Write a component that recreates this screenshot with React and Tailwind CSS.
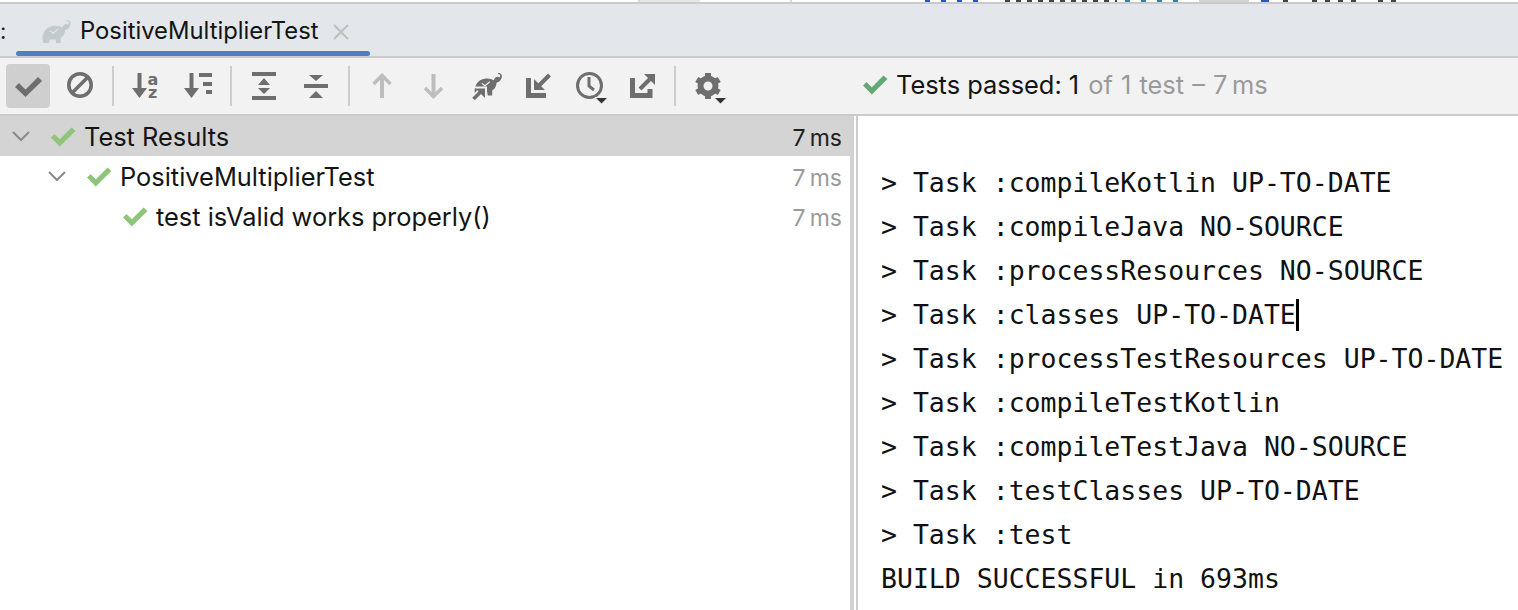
import React from "react";

const ui = "font-['Inter','Liberation_Sans',sans-serif]";
const G = "#6e6e6e";

const Check = ({ c = "#8fc57a", w = 26, h = 20 }) => (
  <svg width={w} height={h} viewBox="0 0 26 20" className="shrink-0">
    <path d="M1 10.5 L4.5 7 L9.8 12.3 L21.5 0.5 L25.5 4 L9.8 19.5 Z" fill={c} />
  </svg>
);

const Chevron = () => (
  <svg width="18" height="12" viewBox="0 0 18 12" className="shrink-0">
    <path d="M1 2 L9 10 L17 2" fill="none" stroke="#8a8a8a" strokeWidth="2" />
  </svg>
);

const Elephant = ({ fill, eye }) => (
  <>
    <path
      d="M3 28 C0 20 4 8 16 7 C20 6.5 24 8 26 9 C27.5 5 31 4 33 5.5 C35 3 34 1 31.5 1.5 L31 0 C35 -0.5 37.5 3 35.5 7 C34 10.5 31.5 12 29.5 12 C29 18 26 21 24 22 L24 28 L18.5 28 L17.5 23 C15 24 13 24 11 23.5 L9.5 28 Z"
      fill={fill}
    />
    {eye && <path d="M11 13 L15 16 L21 11" fill="none" stroke={eye} strokeWidth="1.4" />}
  </>
);

const Tool = ({ children }) => (
  <svg width="44" height="44" viewBox="0 0 44 44">
    {children}
  </svg>
);

const Caret = () => <path d="M28 33.5 H41 L34.5 40 Z" fill="#333333" stroke="#f2f2f2" strokeWidth="1" />;

const icons = {
  check: (
    <Tool>
      <path d="M9 23 L13 19 L19.5 25.5 L32 13 L36 17 L19.5 33 Z" fill={G} />
    </Tool>
  ),
  ban: (
    <Tool>
      <circle cx="22" cy="21" r="11.2" fill="none" stroke={G} strokeWidth="3.6" />
      <path d="M14 29 L30 13" stroke={G} strokeWidth="3.6" />
    </Tool>
  ),
  sortAz: (
    <Tool>
      <path d="M15.5 9 V26" stroke={G} strokeWidth="4" />
      <path d="M8 24 H23 L15.5 34 Z" fill={G} />
      <text x="23.5" y="21" fontSize="16" fontWeight="700" fontFamily="DejaVu Sans" fill={G}>a</text>
      <text x="24" y="34" fontSize="16" fontWeight="700" fontFamily="DejaVu Sans" fill={G}>z</text>
    </Tool>
  ),
  sortDur: (
    <Tool>
      <path d="M15.5 9 V26" stroke={G} strokeWidth="4" />
      <path d="M8 24 H23 L15.5 34 Z" fill={G} />
      <path d="M23 11 H36 M27 20 H36 M30 28 H36" stroke={G} strokeWidth="4" />
    </Tool>
  ),
  expand: (
    <Tool>
      <path d="M10 10 H34 M10 34 H34" stroke={G} strokeWidth="4" />
      <path d="M22 14 L28 21 H16 Z M16 24 H28 L22 30 Z" fill={G} />
    </Tool>
  ),
  collapse: (
    <Tool>
      <path d="M10 22 H34" stroke={G} strokeWidth="4" />
      <path d="M15 11 H29 L22 17 Z M22 27 L29 34 H15 Z" fill={G} />
    </Tool>
  ),
  up: (
    <Tool>
      <path d="M23 12 V34" stroke="#bdbdbd" strokeWidth="4" />
      <path d="M14.5 20 L23 11.5 L31.5 20" fill="none" stroke="#bdbdbd" strokeWidth="3.5" />
    </Tool>
  ),
  down: (
    <Tool>
      <path d="M22.5 10 V32" stroke="#bdbdbd" strokeWidth="4" />
      <path d="M14 24 L22.5 32.5 L31 24" fill="none" stroke="#bdbdbd" strokeWidth="3.5" />
    </Tool>
  ),
  gradleImport: (
    <Tool>
      <g transform="translate(10 9) scale(0.8 0.8)">
        <Elephant fill={G} eye="#f2f2f2" />
      </g>
      <path d="M11 34.5 L20 25.5" stroke="#f2f2f2" strokeWidth="7" />
      <path d="M10.5 22.5 H24 V35 Z" fill="#f2f2f2" />
      <path d="M10.5 35 L19 26.5" stroke={G} strokeWidth="3.6" />
      <path d="M12.5 24.5 H22 V34 Z" fill={G} />
    </Tool>
  ),
  importIn: (
    <Tool>
      <path d="M13.5 14 V31.5 H31" fill="none" stroke={G} strokeWidth="5" />
      <path d="M34.5 11 L22 23.5" stroke={G} strokeWidth="4" />
      <path d="M19 15 V26 H30 Z" fill={G} />
    </Tool>
  ),
  history: (
    <Tool>
      <circle cx="22.5" cy="21.5" r="12" fill="none" stroke={G} strokeWidth="3" />
      <path d="M22 13 V22 L27 26" fill="none" stroke={G} strokeWidth="3" />
      <Caret />
    </Tool>
  ),
  exportOut: (
    <Tool>
      <path d="M13.5 14 V31.5 H31 V25" fill="none" stroke={G} strokeWidth="5" />
      <path d="M21 25 L31 15" stroke={G} strokeWidth="4" />
      <path d="M25 10 H36 V21 Z" fill={G} />
    </Tool>
  ),
  gear: (
    <Tool>
      <circle cx="22" cy="22" r="7.5" fill="none" stroke={G} strokeWidth="6" />
      <g fill={G}>
        {[0, 60, 120, 180, 240, 300].map((a) => (
          <rect key={a} x="19" y="9" width="6" height="5" transform={`rotate(${a} 22 22)`} />
        ))}
      </g>
      <Caret />
    </Tool>
  ),
};

const ToolBtn = ({ name, active }) => (
  <div className={`w-[44px] h-[44px] rounded-[4px] shrink-0 ${active ? "bg-[#cfcfcf]" : ""}`}>{icons[name]}</div>
);

const Sep = () => <div className="w-[2px] h-[40px] bg-[#cdcdcd] mx-[10px] shrink-0" />;

const Row = ({ pl, chevron, selected, dim, label }) => (
  <div className={`h-[40px] pt-[2px] flex items-center pr-[8px] ${selected ? "bg-[#d4d4d4]" : ""}`} style={{ paddingLeft: pl }}>
    {chevron && (
      <div className="w-[38px] flex shrink-0 -mt-[3px]">
        <Chevron />
      </div>
    )}
    <Check />
    <span className={`ml-[8px] text-[25.4px] leading-none text-[#141414] ${ui}`}>{label}</span>
    <span className={`ml-auto mt-[2px] text-[23px] leading-none ${dim ? "text-[#9a9a9a]" : "text-[#202020]"} ${ui}`}>7&#8201;ms</span>
  </div>
);

const lines = [
  "> Task :compileKotlin UP-TO-DATE",
  "> Task :compileJava NO-SOURCE",
  "> Task :processResources NO-SOURCE",
  "> Task :classes UP-TO-DATE",
  "> Task :processTestResources UP-TO-DATE",
  "> Task :compileTestKotlin",
  "> Task :compileTestJava NO-SOURCE",
  "> Task :testClasses UP-TO-DATE",
  "> Task :test",
  "BUILD SUCCESSFUL in 693ms",
];

const strip = [
  ["w-[638px]", "bg-white"],
  ["w-[2px]", "bg-[#d8d8d8]"],
  ["w-[60px]", "bg-[#e6e6e6]"],
  ["w-[90px]", "bg-white"],
  ["w-[2px]", "bg-[#d8d8d8]"],
  ["w-[133px]", "bg-white"],
  ["w-[64px]", "bg-[repeating-linear-gradient(90deg,#2f55c0_0_5px,transparent_5px_16px)]"],
  ["w-[16px]", "bg-white"],
  ["w-[112px]", "bg-[repeating-linear-gradient(90deg,#444444_0_5px,transparent_5px_11px)]"],
  ["w-[8px]", "bg-white"],
  ["w-[64px]", "bg-[repeating-linear-gradient(90deg,#3f7fa0_0_5px,transparent_5px_16px)]"],
  ["w-[10px]", "bg-white"],
  ["w-[50px]", "bg-[#d4d4d4]"],
  ["w-[12px]", "bg-white"],
  ["w-[8px]", "bg-[#2f55c0]"],
  ["w-[14px]", "bg-white"],
  ["w-[5px]", "bg-[#444444]"],
  ["w-[24px]", "bg-white"],
  ["w-[52px]", "bg-[repeating-linear-gradient(90deg,#444444_0_5px,transparent_5px_13px)]"],
  ["w-[14px]", "bg-white"],
  ["w-[26px]", "bg-[repeating-linear-gradient(90deg,#444444_0_5px,transparent_5px_13px)]"],
];

export default function App() {
  return (
    <div className="w-[1518px] h-[610px] bg-white overflow-hidden flex flex-col">
      <div className="h-[2px] flex shrink-0">
        {strip.map(([w, b], i) => (
          <div key={i} className={`${w} ${b} h-full shrink-0`} />
        ))}
      </div>
      <div className="h-[2px] bg-[#cbcbcb] shrink-0" />
      <div className="h-[52px] bg-[#e3e6eb] shrink-0 flex">
        <div className="w-[16px] relative">
          <span className={`absolute left-0 top-[16px] text-[22px] leading-none text-[#222222] ${ui}`}>:</span>
        </div>
        <div className="w-[354px] h-full relative flex items-center pl-[26px] pt-[2px]">
          <svg width="29" height="23" viewBox="2 0 34 28" className="shrink-0">
            <Elephant fill="#c2cace" eye="#e3e6eb" />
          </svg>
          <span className={`ml-[9px] text-[23.8px] leading-none text-[#141414] ${ui}`}>PositiveMultiplierTest</span>
          <svg width="16" height="16" viewBox="0 0 16 16" className="ml-[14px] mt-[2px]">
            <path d="M1 1 L15 15 M15 1 L1 15" stroke="#bdbdbd" strokeWidth="1.8" />
          </svg>
          <div className="absolute left-0 right-0 bottom-0 h-[5px] bg-[#4d7fc4] rounded-full" />
        </div>
      </div>
      <div className="h-[2px] bg-[#cbcbcb] shrink-0" />
      <div className="h-[56px] bg-[#f2f2f2] shrink-0 flex items-center pl-[6px]">
        <ToolBtn name="check" active />
        <div className="w-[8px] shrink-0" />
        <ToolBtn name="ban" />
        <Sep />
        <ToolBtn name="sortAz" />
        <div className="w-[8px] shrink-0" />
        <ToolBtn name="sortDur" />
        <Sep />
        <ToolBtn name="expand" />
        <div className="w-[8px] shrink-0" />
        <ToolBtn name="collapse" />
        <Sep />
        <div className="flex gap-[8px] -ml-[1px] mr-[1px]">
          <ToolBtn name="up" />
          <ToolBtn name="down" />
          <ToolBtn name="gradleImport" />
          <ToolBtn name="importIn" />
          <ToolBtn name="history" />
          <ToolBtn name="exportOut" />
        </div>
        <Sep />
        <ToolBtn name="gear" />
        <div className={`ml-[132px] -mt-[2px] flex items-center text-[25.4px] leading-none ${ui}`}>
          <Check c="#66a873" />
          <span className="ml-[8px] text-[#141414]">Tests passed: 1</span>
          <span className="ml-[9px] text-[#9a9a9a] [word-spacing:1px]">of 1 test – 7&#8201;ms</span>
        </div>
      </div>
      <div className="h-[2px] bg-[#cbcbcb] shrink-0" />
      <div className="flex-1 flex min-h-0">
        <div className="w-[850px] shrink-0">
          <Row pl={12} chevron selected label="Test Results" />
          <Row pl={48} chevron dim label="PositiveMultiplierTest" />
          <Row pl={122} dim label="test isValid works properly()" />
        </div>
        <div className="w-[4px] bg-[#d2d2d2] shrink-0" />
        <div className="w-[2px] bg-white shrink-0" />
        <div className="w-[2px] bg-[#cbcbcb] shrink-0" />
        <div className="flex-1 pl-[23px] pt-[45px] font-['DejaVu_Sans_Mono',monospace] text-[26.5px] leading-[44px] text-[#111111] whitespace-pre">
          {lines.map((l, i) => (
            <div key={i} className="h-[44px]">
              {l}
              {i === 3 && <span className="inline-block w-[3px] h-[32px] bg-black align-[-7px]" />}
            </div>
          ))}
        </div>
      </div>
    </div>
  );
}
